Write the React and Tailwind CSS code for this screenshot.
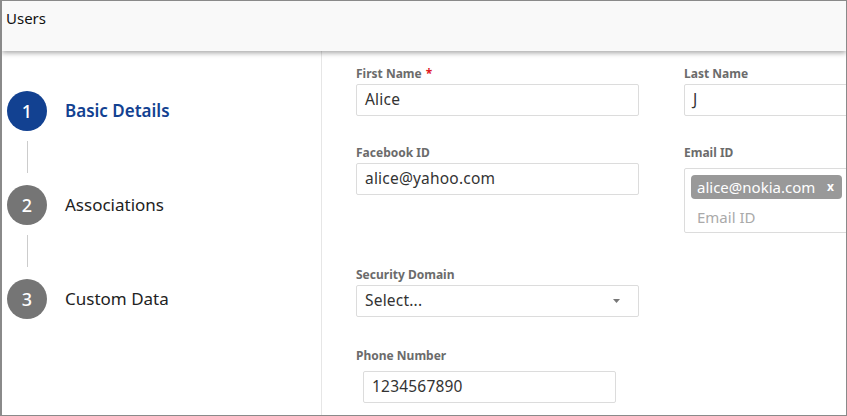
import React from "react";

const font = { fontFamily: '"Noto Sans", "Open Sans", sans-serif' };

const steps = [
  { n: 1, label: "Basic Details", active: true },
  { n: 2, label: "Associations" },
  { n: 3, label: "Custom Data" },
];

// Step list on the left
const Stepper = () => (
  <div className="flex flex-col pt-[40px] pl-[5px]">
    {steps.map((s, i) => (
      <div key={s.n} className="flex flex-col">
        <div className="flex items-center h-[40px]">
          <div
            className={
              "w-[40px] h-[40px] rounded-full flex items-center justify-center text-white text-[18px] font-medium " +
              (s.active ? "bg-[#124191]" : "bg-[#757575]")
            }
          >
            {s.n}
          </div>
          <span
            className={
              "ml-[18px] text-[17px] " +
              (s.active ? "text-[#124191] font-semibold" : "text-[#222]")
            }
          >
            {s.label}
          </span>
        </div>
        {i < steps.length - 1 && (
          <div className="ml-[19.5px] w-px h-[32px] mt-[10px] mb-[12px] bg-[#cccccc]" />
        )}
      </div>
    ))}
  </div>
);

const Label = ({ children, required }) => (
  <div className="text-[12px] leading-[14px] font-bold text-[#6b6b6b]">
    {children}
    {required && <span className="text-[#e0191f] ml-[4px]">*</span>}
  </div>
);

const Input = ({ value, className = "" }) => (
  <div
    className={
      "h-[32px] border border-[#dcdcdc] rounded-[2px] flex items-center px-[8px] text-[15.5px] tracking-[0.2px] text-[#333] bg-white " +
      className
    }
  >
    {value}
  </div>
);

const Form = () => (
  <div className="pl-[34px] pt-[16px] flex flex-col">
    {/* Row 1 */}
    <div className="flex gap-x-[45px]">
      <div className="w-[283px] shrink-0">
        <Label required>First Name</Label>
        <Input value="Alice" className="mt-[3px]" />
      </div>
      <div className="w-[283px] shrink-0">
        <Label>Last Name</Label>
        <Input value="J" className="mt-[3px]" />
      </div>
    </div>

    {/* Row 2 */}
    <div className="flex gap-x-[45px] mt-[30px]">
      <div className="w-[283px] shrink-0">
        <Label>Facebook ID</Label>
        <Input value="alice@yahoo.com" className="mt-[3px]" />
      </div>
      <div className="w-[283px] shrink-0">
        <Label>Email ID</Label>
        <div className="mt-[8px] h-[65px] border border-[#dcdcdc] rounded-[2px] pl-[6px] pt-[6px] flex flex-col">
          <div className="h-[24px] w-[151px] bg-[#999999] rounded-[4px] flex items-center pl-[6px] text-white text-[15px]">
            <span>alice@nokia.com</span>
            <span className="ml-auto mr-[8px] text-[12px] font-bold">x</span>
          </div>
          <div className="mt-[7px] pl-[6px] text-[15px] text-[#aaaaaa]">Email ID</div>
        </div>
      </div>
    </div>

    {/* Row 3 */}
    <div className="w-[283px] mt-[35px]">
      <Label>Security Domain</Label>
      <div className="mt-[3px] h-[32px] border border-[#dcdcdc] rounded-[2px] flex items-center px-[8px] text-[15.5px] tracking-[0.2px] text-[#333]">
        <span>Select...</span>
        <svg className="ml-auto mr-[10px]" width="7" height="4" viewBox="0 0 7 4">
          <path d="M0 0h7L3.5 4z" fill="#777" />
        </svg>
      </div>
    </div>

    {/* Row 4 */}
    <div className="mt-[32px]">
      <Label>Phone Number</Label>
      <Input value="1234567890" className="mt-[8px] ml-[7px] w-[253px]" />
    </div>
  </div>
);

export default function App() {
  return (
    <div
      style={font}
      className="w-[847px] h-[416px] border border-[#8a8a8a] border-l-2 bg-white flex flex-col overflow-hidden"
    >
      <div className="relative z-10 h-[50px] shrink-0 bg-[#f9f9f9] shadow-[0_2px_5px_rgba(0,0,0,0.35)] pl-[4px] pt-[6px] text-[15px] text-[#111]">
        Users
      </div>
      <div className="flex flex-1 min-h-0">
        <div className="w-[320px] shrink-0 border-r border-[#e6e6e6]">
          <Stepper />
        </div>
        <div className="flex-1 min-w-0 overflow-hidden">
          <Form />
        </div>
      </div>
    </div>
  );
}
